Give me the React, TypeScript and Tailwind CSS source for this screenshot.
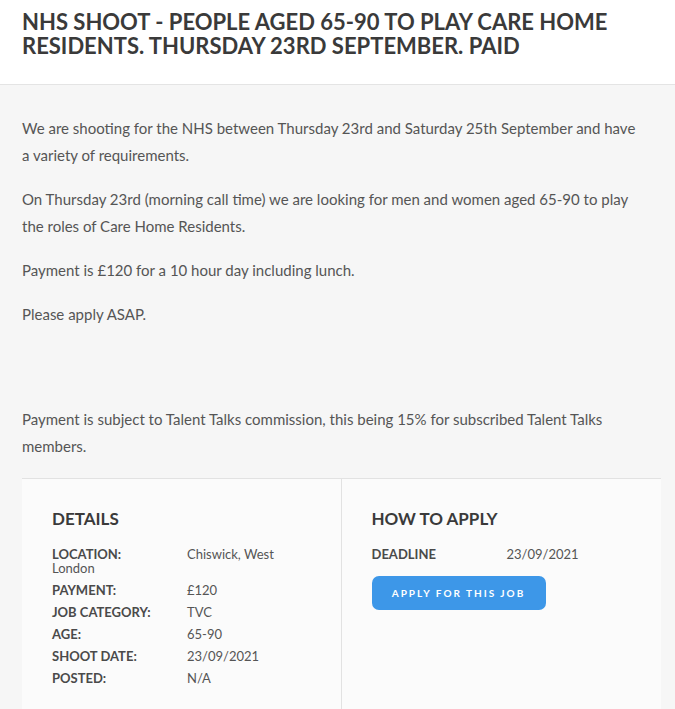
export default function App() {
  const details: [string, string][] = [
    ['LOCATION:', 'Chiswick, West London'],
    ['PAYMENT:', '£120'],
    ['JOB CATEGORY:', 'TVC'],
    ['AGE:', '65-90'],
    ['SHOOT DATE:', '23/09/2021'],
    ['POSTED:', 'N/A'],
  ];

  return (
    <div className="min-h-screen bg-[#f6f6f6] font-['Lato',sans-serif] text-[#555]">
      <header className="border-b border-[#e4e4e4] bg-white px-[22px] pt-[10px] pb-[26px]">
        <h1 className="text-[22px] leading-[24px] font-bold text-[#3a3a3a]">
          NHS SHOOT - PEOPLE AGED 65-90 TO PLAY CARE HOME RESIDENTS. THURSDAY 23RD SEPTEMBER. PAID
        </h1>
      </header>

      <main className="pt-[30px] pr-[14px] pl-[22px]">
        <div className="max-w-[620px] text-[15px] leading-[27px]">
          <p className="mb-[17px]">
            We are shooting for the NHS between Thursday 23rd and Saturday 25th September and have
            a variety of requirements.
          </p>
          <p className="mb-[17px]">
            On Thursday 23rd (morning call time) we are looking for men and women aged 65-90 to play
            the roles of Care Home Residents.
          </p>
          <p className="mb-[17px]">Payment is £120 for a 10 hour day including lunch.</p>
          <p className="mb-[78px]">Please apply ASAP.</p>
          <p className="mb-[18px]">
            Payment is subject to Talent Talks commission, this being 15% for subscribed Talent Talks
            members.
          </p>
        </div>

        <section className="grid grid-cols-2 border-t border-[#e2e2e2] bg-[#fbfbfb] text-[13px]">
          <div className="border-r border-[#e2e2e2] px-[30px] pt-[29px] pb-[30px]">
            <h2 className="mb-[17px] text-[17px] leading-[22px] font-bold text-[#3a3a3a]">DETAILS</h2>
            {details.map(([label, value]) => (
              <div key={label} className="mb-[8px] leading-[14px]">
                <span className="inline-block w-[135px] font-bold text-[#4a4a4a]">{label}</span>
                {value}
              </div>
            ))}
          </div>
          <div className="px-[30px] pt-[29px]">
            <h2 className="mb-[17px] text-[17px] leading-[22px] font-bold text-[#3a3a3a]">
              HOW TO APPLY
            </h2>
            <div className="leading-[14px]">
              <span className="inline-block w-[135px] font-bold text-[#4a4a4a]">DEADLINE</span>
              23/09/2021
            </div>
            <button className="mt-[15px] h-[34px] w-[174px] rounded-[7px] bg-[#3d97e8] text-[10px] font-bold tracking-[2px] text-white">
              APPLY FOR THIS JOB
            </button>
          </div>
        </section>
      </main>
    </div>
  );
}
